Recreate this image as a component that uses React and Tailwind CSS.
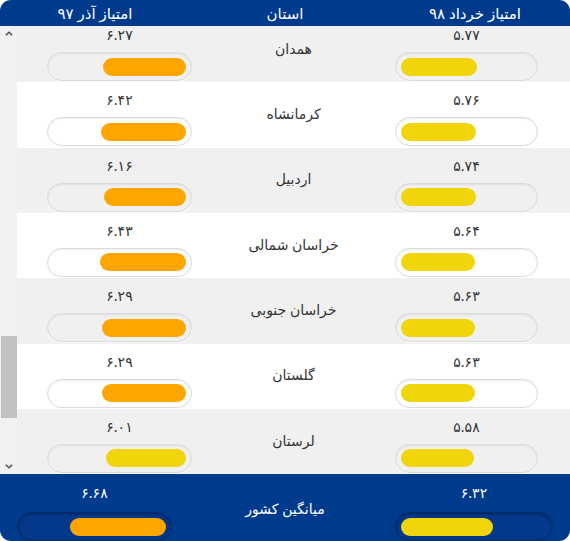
import React from "react";

const rows = [
  { name: "همدان", a: 6.27, aText: "۶.۲۷", aColor: "bg-[#ffa500]", b: 5.77, bText: "۵.۷۷" },
  { name: "کرمانشاه", a: 6.42, aText: "۶.۴۲", aColor: "bg-[#ffa500]", b: 5.76, bText: "۵.۷۶" },
  { name: "اردبیل", a: 6.16, aText: "۶.۱۶", aColor: "bg-[#ffa500]", b: 5.74, bText: "۵.۷۴" },
  { name: "خراسان شمالی", a: 6.43, aText: "۶.۴۳", aColor: "bg-[#ffa500]", b: 5.64, bText: "۵.۶۴" },
  { name: "خراسان جنوبی", a: 6.29, aText: "۶.۲۹", aColor: "bg-[#ffa500]", b: 5.63, bText: "۵.۶۳" },
  { name: "گلستان", a: 6.29, aText: "۶.۲۹", aColor: "bg-[#ffa500]", b: 5.63, bText: "۵.۶۳" },
  { name: "لرستان", a: 6.01, aText: "۶.۰۱", aColor: "bg-[#f0d50a]", b: 5.58, bText: "۵.۵۸" },
];

const font = { fontFamily: '"Noto Sans", "DejaVu Sans", sans-serif' };

function Track({ value, color, right, dark }) {
  return (
    <div
      className={`flex items-center h-[29px] rounded-full px-[5px] ${right ? "justify-end" : "justify-start"} ${
        dark
          ? "border border-[#022c68] bg-[#03388a] shadow-[inset_0_1px_3px_rgba(0,0,0,0.35)]"
          : "border border-[#dadada] shadow-[inset_0_1px_2px_rgba(0,0,0,0.07),0_1px_1px_rgba(255,255,255,0.9)]"
      }`}
    >
      <div className={`h-[18px] rounded-full ${color}`} style={{ width: `${value * 10}%` }} />
    </div>
  );
}

function Chevron({ down }) {
  return (
    <svg width="8" height="5" viewBox="0 0 8 5" className={down ? "rotate-180" : ""}>
      <path d="M0.8 4.3 L4 1.2 L7.2 4.3" fill="none" stroke="#505050" strokeWidth="1.5" />
    </svg>
  );
}

export default function App() {
  return (
    <div className="w-[570px] h-[541px] flex flex-col bg-white text-[#333]" style={font}>
      {/* header */}
      <div className="h-[26px] grid grid-cols-3 bg-[#003a8c] text-white text-[15px] rounded-t-[11px] items-center">
        <div className="text-center">امتیاز آذر ۹۷</div>
        <div className="text-center">استان</div>
        <div className="text-center">امتیاز خرداد ۹۸</div>
      </div>

      {/* body */}
      <div className="h-[448px] flex bg-[#f0f0f0]">
        <div className="w-[17px] flex flex-col bg-[#f1f1f1]">
          <div className="h-[15px] flex items-center justify-center">
            <Chevron />
          </div>
          <div className="mt-[295px] ml-[1px] w-[16px] h-[82px] bg-[#c1c1c1]" />
          <div className="mt-auto h-[15px] flex items-center justify-center">
            <Chevron down />
          </div>
        </div>
        <div className="flex-1 overflow-hidden">
          <div className="mt-[-9px]">
            {rows.map((r, i) => (
              <div
                key={r.name}
                className={`h-[65.33px] grid grid-cols-[184px_185px_184px] ${i % 2 ? "bg-white" : "bg-[#f0f0f0]"}`}
              >
                <div className="flex flex-col pl-[30px] pr-[9px] pt-[10px]">
                  <div className="text-center text-[14px] leading-[16px]">{r.aText}</div>
                  <div className="mt-[9px]">
                    <Track value={r.a} color={r.aColor} right />
                  </div>
                </div>
                <div className="flex items-center justify-center pb-[3px] text-[14px]">{r.name}</div>
                <div className="flex flex-col pl-[9px] pr-[32px] pt-[10px]">
                  <div className="text-center text-[14px] leading-[16px]">{r.bText}</div>
                  <div className="mt-[9px]">
                    <Track value={r.b} color="bg-[#f0d50a]" />
                  </div>
                </div>
              </div>
            ))}
          </div>
        </div>
      </div>

      {/* footer */}
      <div className="h-[67px] grid grid-cols-3 bg-[#003a8c] text-white rounded-b-[11px] overflow-hidden">
        <div className="flex flex-col pl-[17px] pr-[18px] pt-[11px]">
          <div className="text-center text-[14px] leading-[16px]">۶.۶۸</div>
          <div className="mt-[11px]">
            <Track value={6.68} color="bg-[#ffa500]" right dark />
          </div>
        </div>
        <div className="flex items-center justify-center text-[14px] pt-[1px]">میانگین کشور</div>
        <div className="flex flex-col pl-[15px] pr-[17px] pt-[11px]">
          <div className="text-center text-[14px] leading-[16px]">۶.۳۲</div>
          <div className="mt-[11px]">
            <Track value={6.32} color="bg-[#f0d50a]" dark />
          </div>
        </div>
      </div>
    </div>
  );
}
